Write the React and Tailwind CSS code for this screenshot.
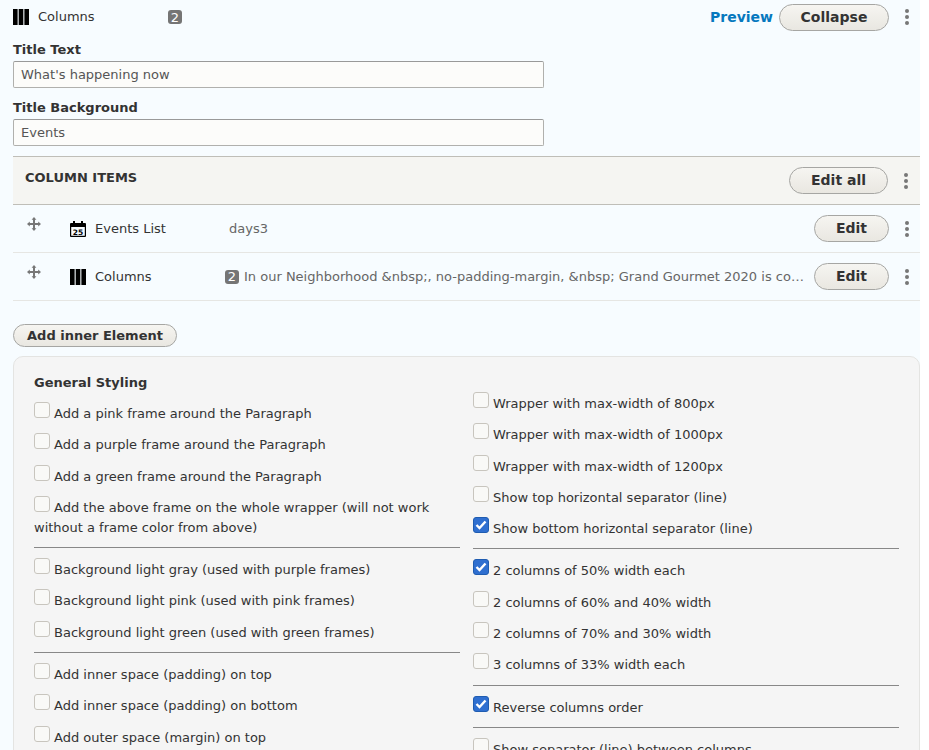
const FONT = "font-['DejaVu_Sans',sans-serif]";

const leftGroups = [
  [
    "Add a pink frame around the Paragraph",
    "Add a purple frame around the Paragraph",
    "Add a green frame around the Paragraph",
    "Add the above frame on the whole wrapper (will not work without a frame color from above)",
  ],
  [
    "Background light gray (used with purple frames)",
    "Background light pink (used with pink frames)",
    "Background light green (used with green frames)",
  ],
  [
    "Add inner space (padding) on top",
    "Add inner space (padding) on bottom",
    "Add outer space (margin) on top",
  ],
];

const rightGroups = [
  [
    { label: "Wrapper with max-width of 800px" },
    { label: "Wrapper with max-width of 1000px" },
    { label: "Wrapper with max-width of 1200px" },
    { label: "Show top horizontal separator (line)" },
    { label: "Show bottom horizontal separator (line)", checked: true },
  ],
  [
    { label: "2 columns of 50% width each", checked: true },
    { label: "2 columns of 60% and 40% width" },
    { label: "2 columns of 70% and 30% width" },
    { label: "3 columns of 33% width each" },
  ],
  [{ label: "Reverse columns order", checked: true }],
  [{ label: "Show separator (line) between columns" }],
];

function ColumnsIcon() {
  return (
    <svg width="16" height="16" viewBox="0 0 16 16" className="shrink-0">
      <rect x="0" y="0" width="4.6" height="16" fill="#000" />
      <rect x="5.7" y="0" width="4.6" height="16" fill="#000" />
      <rect x="11.4" y="0" width="4.6" height="16" fill="#000" />
    </svg>
  );
}

function CalendarIcon() {
  return (
    <svg width="16" height="16" viewBox="0 0 16 16" className="shrink-0">
      <path d="M3 0h2v2h6V0h2v2h2a1 1 0 0 1 1 1v12a1 1 0 0 1-1 1H1a1 1 0 0 1-1-1V3a1 1 0 0 1 1-1h2zM1.2 6v8.8h13.6V6z" fill="#000" />
      <text x="8" y="13.6" textAnchor="middle" fontSize="7.5" fontWeight="700" fontFamily="DejaVu Sans" fill="#000">25</text>
    </svg>
  );
}

function MoveIcon() {
  return (
    <svg width="14" height="14" viewBox="0 0 14 14" className="shrink-0">
      <path d="M7 0l2.4 2.8H8v3.2h3.2V4.6L14 7l-2.8 2.4V8H8v3.2h1.4L7 14l-2.4-2.8H6V8H2.8v1.4L0 7l2.8-2.4V6H6V2.8H4.6z" fill="#777" />
    </svg>
  );
}

function Dots() {
  return (
    <div className="flex w-[4px] flex-col gap-[2px]">
      <span className="size-[4px] rounded-full bg-[#777]" />
      <span className="size-[4px] rounded-full bg-[#777]" />
      <span className="size-[4px] rounded-full bg-[#777]" />
    </div>
  );
}

function Badge() {
  return (
    <span className="inline-flex h-[14px] w-[14px] shrink-0 items-center justify-center rounded-[3px] bg-[#757575] text-[13px] leading-none text-white">
      2
    </span>
  );
}

function PillButton({ children, className }) {
  return (
    <button
      className={`flex shrink-0 items-center justify-center rounded-full border border-[#a6a6a3] bg-gradient-to-b from-[#f6f5f1] to-[#e9e7e1] font-bold text-[#333] ${className}`}
    >
      {children}
    </button>
  );
}

function Checkbox({ checked }) {
  if (checked) {
    return (
      <span className="mr-[4px] inline-block size-[16px] rounded-[3px] border border-[#1f5cb0] bg-[#2f6fd0] align-baseline">
        <svg width="12" height="10" viewBox="0 0 12 10" className="mx-auto mt-[2px] block">
          <path d="M1.5 5l3 3 6-6.5" fill="none" stroke="#fff" strokeWidth="2.4" />
        </svg>
      </span>
    );
  }
  return (
    <span className="mr-[4px] inline-block size-[16px] rounded-[3px] border border-[#c8c5be] bg-[#f9f9f7] align-baseline" />
  );
}

function CheckItem({ label, checked }) {
  return (
    <div className="pb-[9.3px] text-[13px] leading-[20px] text-[#333]">
      <Checkbox checked={checked} />
      {label}
    </div>
  );
}

function TextField({ label, value }) {
  return (
    <div className="mb-[10px]">
      <label className="block text-[13px] font-bold leading-[20px] text-[#333]">{label}</label>
      <div className="mt-[1px] flex h-[27px] w-[531px] items-center rounded-[2px] border border-[#b0b0ad] border-t-[#999] bg-[#fcfcfa] pl-[7px] text-[13px] text-[#555]">
        {value}
      </div>
    </div>
  );
}

export default function App() {
  return (
    <div className={`h-[750px] w-[929px] overflow-hidden bg-white ${FONT}`}>
      <div className="h-full w-[920px] bg-[#f7fcff] pl-[13px]">
        <div className="flex h-[33px] items-center pt-[1px]">
          <ColumnsIcon />
          <span className="ml-[9px] w-[130px] text-[13px] text-[#333]">Columns</span>
          <Badge />
          <a className="ml-auto text-[14px] font-bold text-[#0678be]">Preview</a>
          <PillButton className="ml-[6px] h-[27px] w-[110px] text-[14px]">Collapse</PillButton>
          <div className="ml-[16px] mr-[11px]">
            <Dots />
          </div>
        </div>

        <div className="pt-[7px]">
          <TextField label="Title Text" value="What's happening now" />
          <TextField label="Title Background" value="Events" />
        </div>

        <div className="flex h-[49px] items-start justify-between border-y border-[#bfbeb8] bg-[#f5f5f2] pl-[12px] pt-[10px]">
          <span className="pt-[1px] text-[13px] font-bold leading-[20px] text-[#333]">COLUMN ITEMS</span>
          <div className="flex items-center">
            <PillButton className="h-[27px] w-[99px] text-[14px]">Edit all</PillButton>
            <div className="ml-[16px] mr-[12px]">
              <Dots />
            </div>
          </div>
        </div>

        <div className="flex h-[48px] items-center border-b border-[#e6e6e3]">
          <div className="ml-[14px] w-[43px] self-start pt-[12px]">
            <MoveIcon />
          </div>
          <CalendarIcon />
          <span className="ml-[9px] w-[134px] text-[13px] text-[#333]">Events List</span>
          <span className="text-[13px] text-[#666]">days3</span>
          <PillButton className="ml-auto h-[27px] w-[75px] text-[14px]">Edit</PillButton>
          <div className="ml-[16px] mr-[11px]">
            <Dots />
          </div>
        </div>

        <div className="flex h-[48px] items-center border-b border-[#e6e6e3]">
          <div className="ml-[14px] w-[43px] self-start pt-[12px]">
            <MoveIcon />
          </div>
          <ColumnsIcon />
          <span className="ml-[9px] w-[130px] text-[13px] text-[#333]">Columns</span>
          <Badge />
          <span className="ml-[5px] w-[560px] truncate text-[13px] text-[#666]">
            In our Neighborhood &amp;nbsp;, no-padding-margin, &amp;nbsp; Grand Gourmet 2020 is coming soon to town
          </span>
          <PillButton className="ml-auto h-[27px] w-[75px] text-[14px]">Edit</PillButton>
          <div className="ml-[16px] mr-[11px]">
            <Dots />
          </div>
        </div>

        <PillButton className="mt-[23px] h-[23px] w-[164px] text-[13px]">Add inner Element</PillButton>

        <div className="mt-[9px] grid grid-cols-[426px_426px] gap-x-[13px] rounded-[10px] border border-[#e4e4e2] bg-[#f5f5f5] px-[20px] pt-[16px]">
          <div>
            <div className="mb-[9px] text-[13px] font-bold leading-[20px] text-[#333]">General Styling</div>
            {leftGroups.map((group, i) => (
              <div key={i} className={i > 0 ? "border-t border-[#888] pt-[10px]" : ""}>
                {group.map((label) => (
                  <CheckItem key={label} label={label} />
                ))}
              </div>
            ))}
          </div>
          <div className="pt-[19px]">
            {rightGroups.map((group, i) => (
              <div key={i} className={i > 0 ? "border-t border-[#888] pt-[10px]" : ""}>
                {group.map((item) => (
                  <CheckItem key={item.label} label={item.label} checked={item.checked} />
                ))}
              </div>
            ))}
          </div>
        </div>
      </div>
    </div>
  );
}
